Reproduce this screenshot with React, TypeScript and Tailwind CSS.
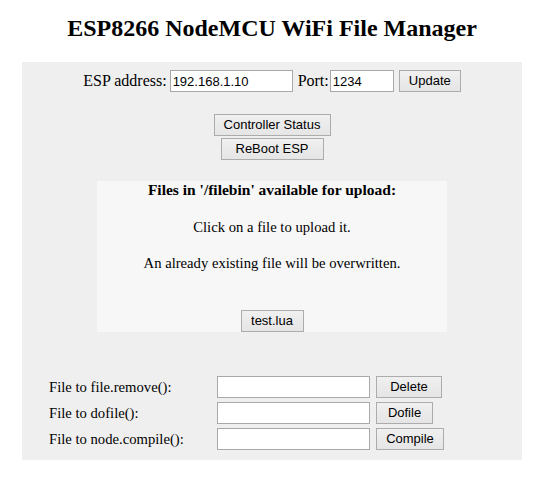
import React from "react";

const btn =
  "h-[22px] border border-[#acacac] bg-linear-to-b from-[#f0f0f0] to-[#e5e5e5] text-[13px] leading-[20px] text-black font-['Liberation_Sans',Arial,sans-serif] text-center";
const inp =
  "h-[22px] border border-[#a9a9a9] bg-white px-[2px] text-[13px] text-black font-['Liberation_Sans',Arial,sans-serif] outline-none";

function Row({ label, action, w }: { label: string; action: string; w: string }) {
  return (
    <>
      <div className="flex h-[22px] items-center text-[14.67px] leading-[17px]">{label}</div>
      <input className={`${inp} block w-[153px]`} defaultValue="" />
      <div className="flex h-[22px] items-center pl-[6px]">
        <button className={`${btn} ${w}`}>{action}</button>
      </div>
    </>
  );
}

export default function App() {
  return (
    <div className="min-h-[483px] bg-white text-black font-['Liberation_Serif','Times_New_Roman',serif]">
      <h2 className="pt-[14px] text-center text-[24px] leading-[28px] font-bold">
        ESP8266 NodeMCU WiFi File Manager
      </h2>
      <div className="mx-auto mt-[20px] w-[500px] bg-[#efefef] pt-[8px] pb-[10px]">
        <div className="flex h-[22px] items-center justify-center text-[16px]">
          <span>ESP address:</span>
          <input className={`${inp} ml-[3px] w-[123px]`} defaultValue="192.168.1.10" />
          <span className="ml-[5px]">Port:</span>
          <input className={`${inp} ml-[1px] w-[64px]`} defaultValue="1234" />
          <button className={`${btn} ml-[5px] w-[62px]`}>Update</button>
        </div>
        <div className="mt-[22px] flex flex-col items-center gap-[2px]">
          <button className={`${btn} w-[117px]`}>Controller Status</button>
          <button className={`${btn} w-[103px]`}>ReBoot ESP</button>
        </div>
        <div className="mx-auto mt-[21px] flex h-[151px] w-[350px] flex-col items-center bg-[#f7f7f7] leading-[18px]">
          <p className="text-[15.5px] font-bold">Files in '/filebin' available for upload:</p>
          <p className="mt-[19px] text-[14.67px]">Click on a file to upload it.</p>
          <p className="mt-[18px] text-[14.67px]">An already existing file will be overwritten.</p>
          <button className={`${btn} mt-[38px] w-[63px]`}>test.lua</button>
        </div>
        <div className="mt-[44px] grid grid-cols-[168px_153px_auto] items-center gap-y-[4px] pl-[27px]">
          <Row label="File to file.remove():" action="Delete" w="w-[66px]" />
          <Row label="File to dofile():" action="Dofile" w="w-[57px]" />
          <Row label="File to node.compile():" action="Compile" w="w-[68px]" />
        </div>
      </div>
    </div>
  );
}
